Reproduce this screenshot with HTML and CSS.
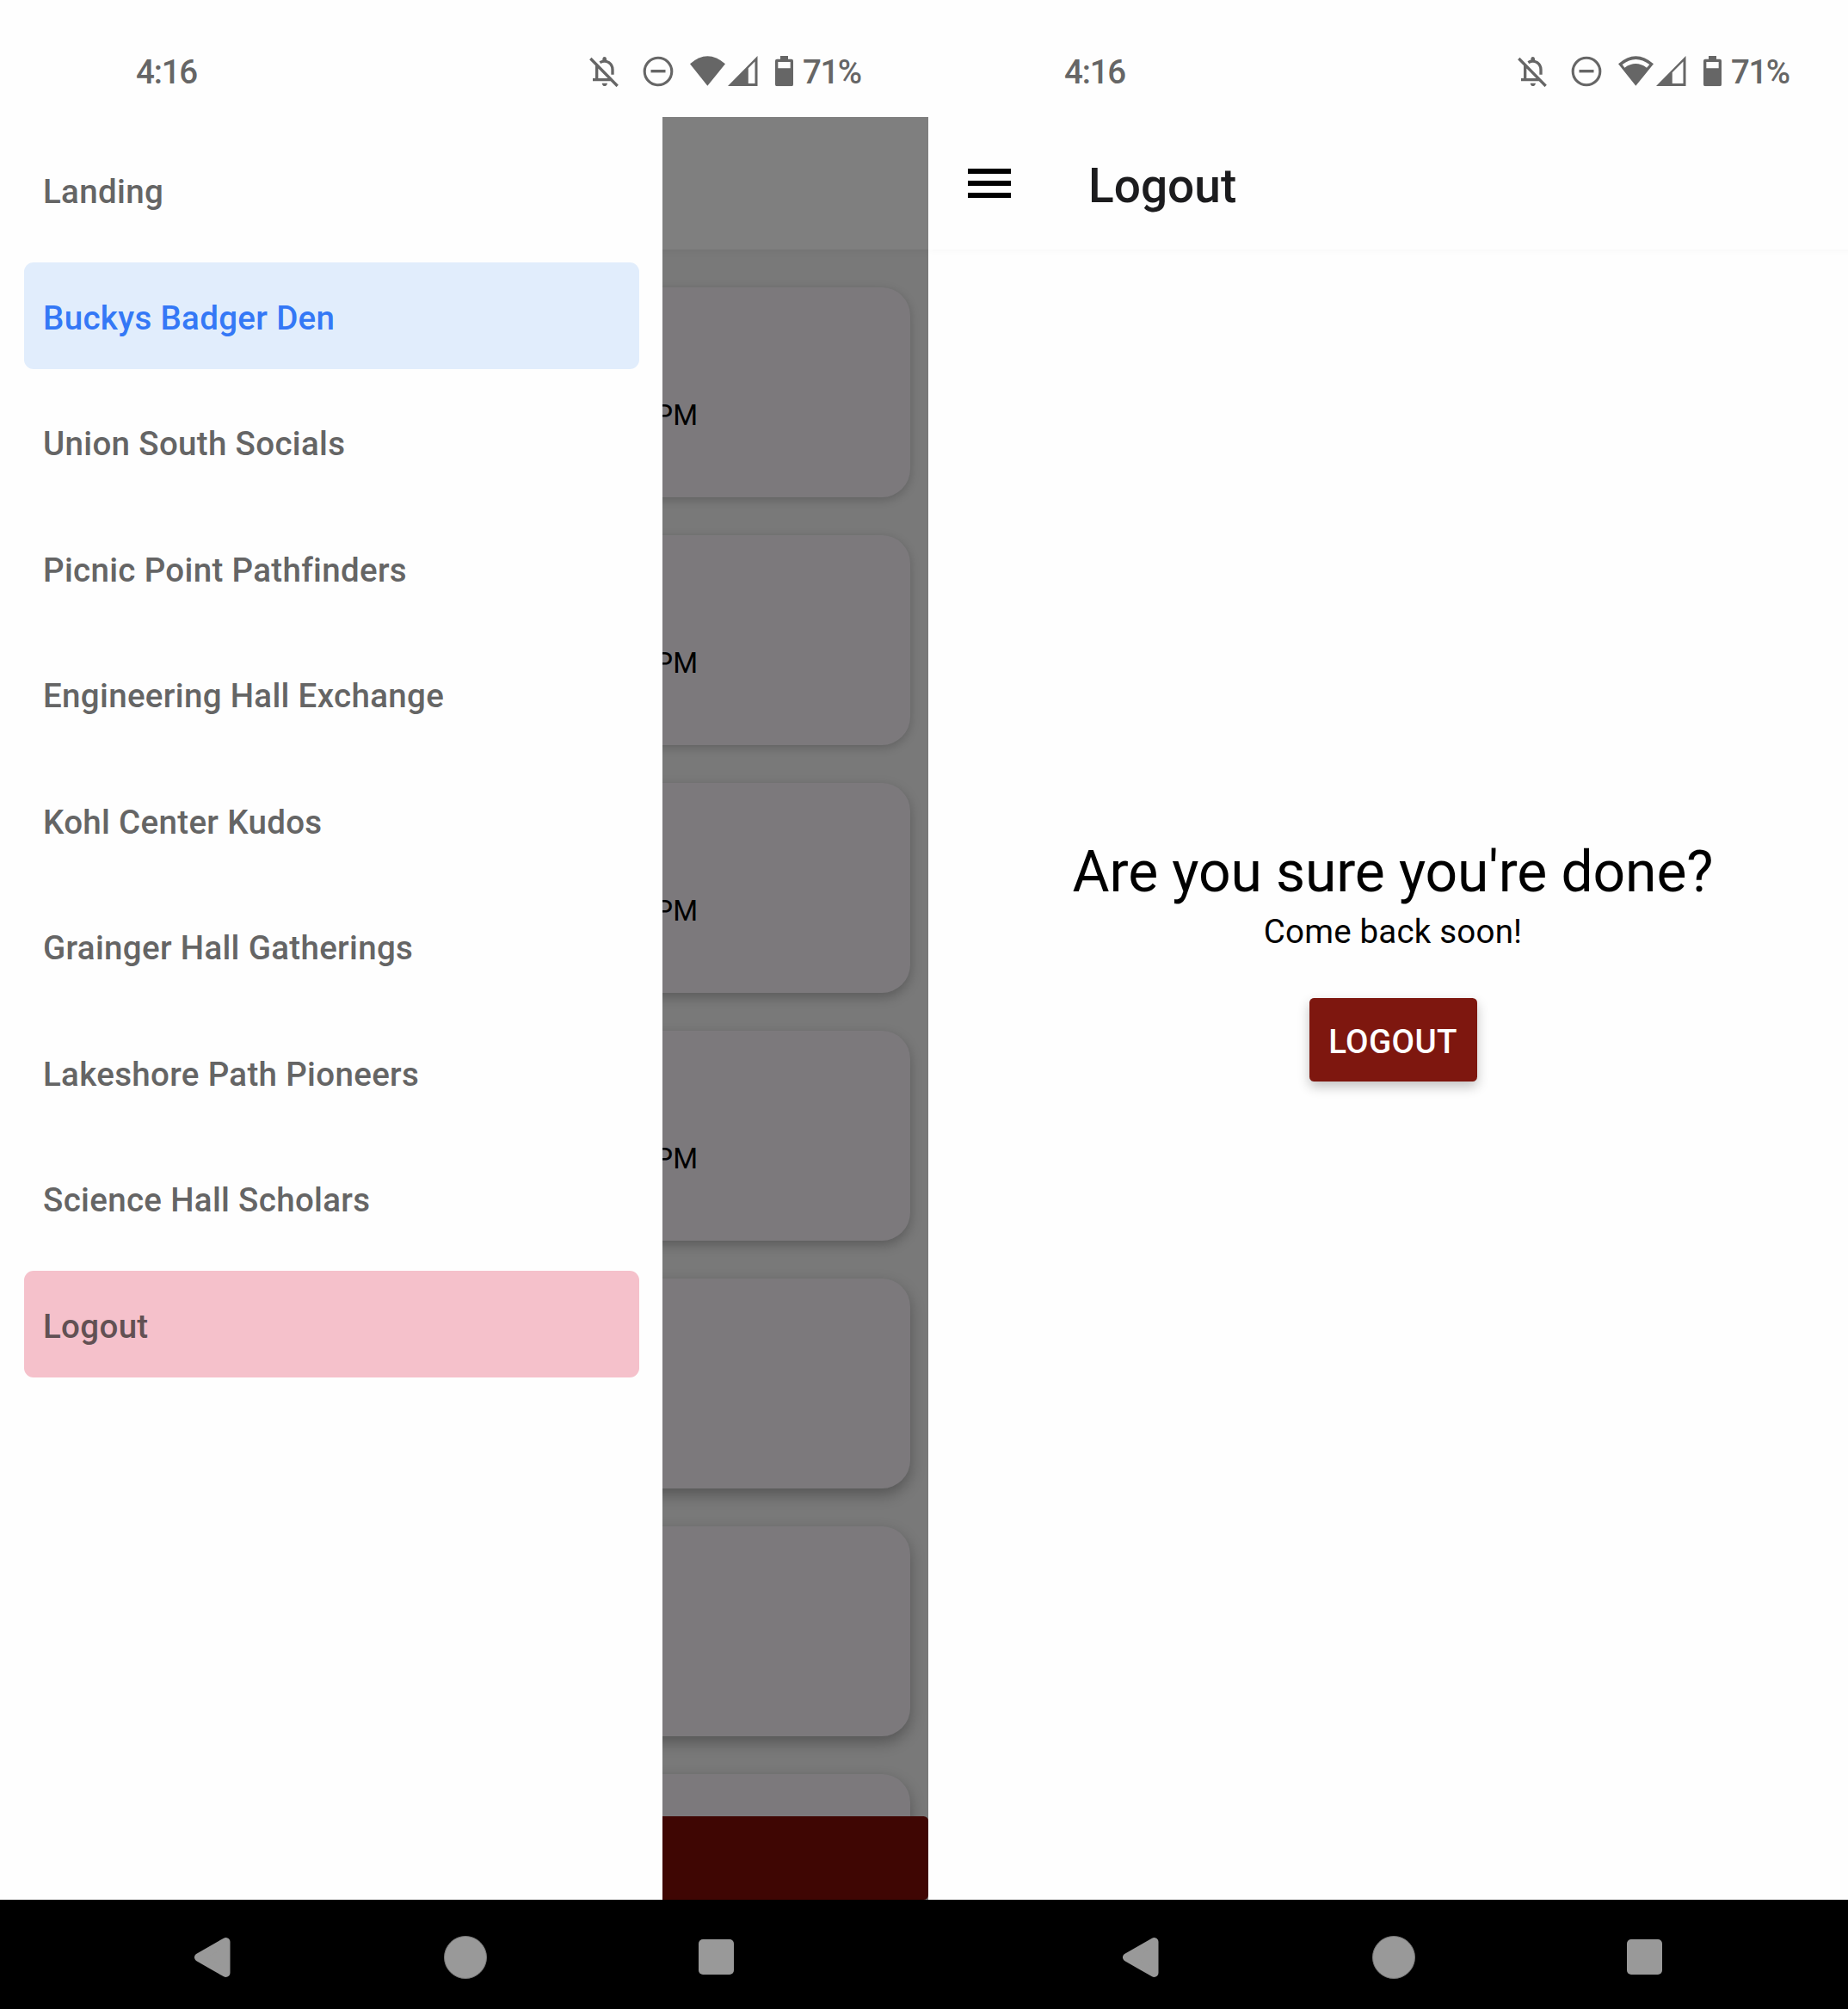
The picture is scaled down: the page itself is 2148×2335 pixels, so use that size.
FILE: index.html
```html
<!DOCTYPE html>
<html lang="en">
<head>
<meta charset="utf-8">
<title>Channels</title>
<link rel="stylesheet" href="styles.css">
</head>
<body>
<svg class="defs" width="0" height="0">
  <defs>
    <symbol id="bell-off" viewBox="75 76 102 108">
      <g fill="none" stroke="#666" stroke-width="10">
        <path d="M79 85L173 181M101 107V159M87 159H151M112 99Q128 90 143 99Q156 108 156 124V141"/>
      </g>
      <path d="M121 92V86Q122 79 128 79Q134 79 135 86V92ZM119 171H138Q136 181 128 181Q121 181 119 171Z" fill="#666"/>
    </symbol>
    <symbol id="dnd" viewBox="0 0 36 36">
      <circle cx="18" cy="18" r="15.8" fill="none" stroke="#666" stroke-width="3.1"/>
      <path d="M9.5 17.7H26.5" stroke="#666" stroke-width="3.4"/>
    </symbol>
    <symbol id="battery" viewBox="723 76 63 106">
      <path fill="#666" fill-rule="evenodd" d="M741 76H768V87H780Q786 87 786 93V176Q786 182 780 182H729Q723 182 723 176V93Q723 87 729 87H741ZM733 97V119H776V97Z"/>
    </symbol>
    <symbol id="back" viewBox="0 0 42 48">
      <path d="M5 24L36.5 6V42Z" fill="#999" stroke="#999" stroke-width="10" stroke-linejoin="round"/>
    </symbol>
  </defs>
</svg>
<main class="board">
  <section class="phone phone-left">
    <header class="status">
      <span class="clock">4:16</span>
      <svg class="i-bell"><use href="#bell-off"/></svg>
      <svg class="i-dnd"><use href="#dnd"/></svg>
      <svg class="i-wifi" viewBox="426 75 123 105"><path fill="#666" d="M426 103Q487 49 549 103L487 179Z"/></svg>
      <svg class="i-signal" viewBox="559 76 103 104"><path fill="#666" fill-rule="evenodd" d="M559 180L662 76V180ZM630 118V171H653V95Z"/></svg>
      <svg class="i-battery"><use href="#battery"/></svg>
      <span class="percent">71%</span>
    </header>
    <div class="screen">
      <div class="appbar"></div>
      <div class="chat">
        <div class="messages">
          <article class="card"><time>PM</time></article>
          <article class="card"><time>PM</time></article>
          <article class="card"><time>PM</time></article>
          <article class="card"><time>PM</time></article>
          <article class="card"></article>
          <article class="card"></article>
          <article class="card"></article>
        </div>
        <div class="compose"></div>
      </div>
      <div class="scrim"></div>
      <nav class="drawer">
        <a class="item">Landing</a>
        <a class="item active">Buckys Badger Den</a>
        <a class="item">Union South Socials</a>
        <a class="item">Picnic Point Pathfinders</a>
        <a class="item">Engineering Hall Exchange</a>
        <a class="item">Kohl Center Kudos</a>
        <a class="item">Grainger Hall Gatherings</a>
        <a class="item">Lakeshore Path Pioneers</a>
        <a class="item">Science Hall Scholars</a>
        <a class="item logout">Logout</a>
      </nav>
    </div>
    <footer class="navbar">
      <svg class="n-back"><use href="#back"/></svg>
      <span class="n-home"></span>
      <span class="n-recent"></span>
    </footer>
  </section>
  <section class="phone phone-right">
    <header class="status">
      <span class="clock">4:16</span>
      <svg class="i-bell"><use href="#bell-off"/></svg>
      <svg class="i-dnd"><use href="#dnd"/></svg>
      <svg class="i-wifi" viewBox="426 75 123 105"><path fill="#666" fill-rule="evenodd" d="M426 103Q487 49 549 103L487 179ZM440 105L448 116Q487 88 525 116L535 105Q487 69 440 105Z"/></svg>
      <svg class="i-signal" viewBox="559 76 103 104"><path fill="#666" fill-rule="evenodd" d="M559 180L662 76V180ZM615 133V171H653V95Z"/></svg>
      <svg class="i-battery"><use href="#battery"/></svg>
      <span class="percent">71%</span>
    </header>
    <div class="screen">
      <div class="appbar">
        <span class="menu"><i></i><i></i><i></i></span>
        <h1>Logout</h1>
      </div>
      <div class="confirm">
        <h2>Are you sure you're done?</h2>
        <p>Come back soon!</p>
        <button class="button">LOGOUT</button>
      </div>
    </div>
    <footer class="navbar">
      <svg class="n-back"><use href="#back"/></svg>
      <span class="n-home"></span>
      <span class="n-recent"></span>
    </footer>
  </section>
</main>
</body>
</html>
```
FILE: styles.css
```css
* { box-sizing: border-box; }
body { margin: 0; font-family: Roboto, "Liberation Sans", sans-serif; background: #fefefe; color: #000; }
h1, h2, p { margin: 0; }
.defs { display: block; height: 0; }
.board { display: grid; grid-template-columns: 1079px 1069px; height: 2335px; overflow: hidden; }
.phone { display: grid; grid-template-rows: 136px 2072px 127px; overflow: hidden; }
.phone-right { grid-template-columns: 1080px; }
.phone-left { grid-template-columns: 1079px; }

.status { display: flex; align-items: flex-start; padding: 65px 0 0 158px; color: #666; font-weight: 500; font-size: 38.5px; line-height: 37px; }
.status svg { display: block; flex: none; }
.clock { width: 527px; letter-spacing: -1.2px; }
.i-bell { width: 34px; height: 36px; }
.i-dnd { width: 36px; height: 36px; margin-left: 28px; margin-top: -.5px; }
.i-wifi { width: 41px; height: 35px; margin-left: 18.5px; }
.i-signal { width: 34.5px; height: 35px; margin-left: 3.5px; }
.i-battery { width: 21px; height: 35.3px; margin-left: 20px; margin-top: .4px; }
.percent { margin-left: 11.5px; letter-spacing: -1.5px; }

.screen { position: relative; display: flex; flex-direction: column; overflow: hidden; }
.appbar { flex: none; height: 154px; display: flex; align-items: center; background: #fff; }
.phone-right .appbar { background: #fefefe; box-shadow: 0 1px 8px rgba(0, 0, 0, .03); padding-left: 46px; }
.chat { flex: 1; min-height: 0; display: flex; flex-direction: column; background: #f2f2f2; box-shadow: inset 0 8px 10px -6px rgba(0, 0, 0, .05); }
.messages { flex: 1; min-height: 0; overflow: hidden; padding: 44px 21px 0 22px; display: flex; flex-direction: column; gap: 44px; }
.card { flex: none; height: 244px; border-radius: 33px; background: #f8f3f9; padding: 129px 247px 0 0; text-align: right; font-size: 33px; line-height: 40px; box-shadow: 0 3px 12px rgba(0, 0, 0, .2); }
.card time { display: block; }
.card:nth-child(n+3) { box-shadow: 0 5px 14px rgba(0, 0, 0, .25); }
.card:nth-child(n+5) { box-shadow: 0 7px 17px rgba(0, 0, 0, .3); }
.compose { flex: none; height: 97px; background: #7e0d07; border-radius: 5.5px; }
.scrim { position: absolute; inset: 0; background: rgba(0, 0, 0, .5); }
.drawer { position: absolute; top: 0; bottom: 0; left: 0; width: 770px; padding: 22.5px 27.5px; background: #fefefe; display: flex; flex-direction: column; gap: 22.5px; }
.item { height: 124px; border-radius: 11px; padding: 4px 22.5px 0; display: flex; align-items: center; font-size: 38.5px; font-weight: 500; letter-spacing: .33px; color: #656565; }
.active { background: #e1edfc; color: #3478f6; }
.logout { background: #f5c1cb; color: #625154; }

.menu { display: flex; flex-direction: column; gap: 8px; width: 50px; }
.menu i { height: 6px; background: #000; }
h1 { margin-left: 90px; padding-top: 5px; font-size: 55px; font-weight: 500; color: #1c1c1e; }
.confirm { display: flex; flex-direction: column; align-items: center; padding-top: 685px; }
h2 { font-size: 66px; line-height: 78px; font-weight: 400; letter-spacing: -.12px; }
.confirm p { margin-top: 7px; font-size: 38.5px; line-height: 46px; letter-spacing: .2px; }
.button { margin-top: 54px; width: 195px; height: 97px; border: 0; border-radius: 5.5px; background: #7e170f; color: #fff; font: 500 38.5px Roboto, sans-serif; letter-spacing: .35px; padding: 3px 0 0; box-shadow: 0 6px 14px rgba(0, 0, 0, .24); }

.navbar { background: #000; display: flex; align-items: center; padding: 6px 0 0 226px; }
.n-back { width: 42px; height: 48px; }
.n-home { width: 50px; height: 50px; margin-left: 248px; border-radius: 50%; background: #999; border: 1px solid #777; }
.n-recent { width: 41px; height: 41px; margin-left: 246px; border-radius: 5px; background: #999; }
```
